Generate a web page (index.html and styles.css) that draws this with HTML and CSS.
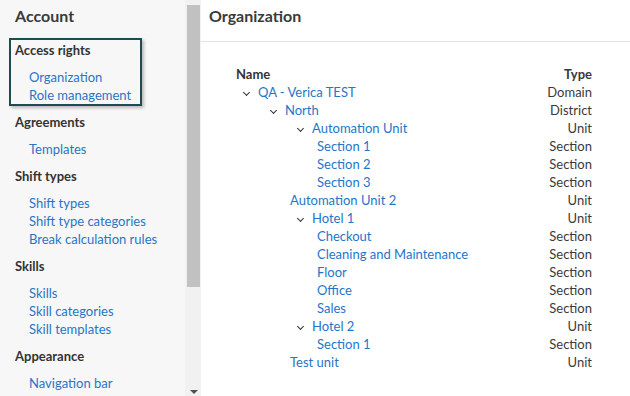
FILE: index.html
```html
<!DOCTYPE html>
<html lang="en">
<head>
    <meta charset="UTF-8">
    <title>Organization</title>
    <link rel="stylesheet" href="styles.css">
</head>
<body>
    <div class="app">
        <nav class="sidebar">
            <div class="account">Account</div>
            <div class="group marked">
                <div class="group-title">Access rights</div>
                <a class="link">Organization</a>
                <a class="link">Role management</a>
            </div>
            <div class="group">
                <div class="group-title">Agreements</div>
                <a class="link">Templates</a>
            </div>
            <div class="group">
                <div class="group-title">Shift types</div>
                <a class="link">Shift types</a>
                <a class="link">Shift type categories</a>
                <a class="link">Break calculation rules</a>
            </div>
            <div class="group">
                <div class="group-title">Skills</div>
                <a class="link">Skills</a>
                <a class="link">Skill categories</a>
                <a class="link">Skill templates</a>
            </div>
            <div class="group">
                <div class="group-title">Appearance</div>
                <a class="link">Navigation bar</a>
            </div>
        </nav>
        <div class="scrollbar">
            <div class="thumb"></div>
            <div class="arrow"></div>
        </div>
        <main class="main">
            <h1 class="title">Organization</h1>
            <table class="org">
                <thead>
                    <tr><th class="name">Name</th><th class="type">Type</th></tr>
                </thead>
                <tbody>
                    <tr><td class="name lv0"><span class="chev"></span><a>QA - Verica TEST</a></td><td class="type">Domain</td></tr>
                    <tr><td class="name lv1"><span class="chev"></span><a>North</a></td><td class="type">District</td></tr>
                    <tr><td class="name lv2"><span class="chev"></span><a>Automation Unit</a></td><td class="type">Unit</td></tr>
                    <tr><td class="name lv3"><a>Section 1</a></td><td class="type">Section</td></tr>
                    <tr><td class="name lv3"><a>Section 2</a></td><td class="type">Section</td></tr>
                    <tr><td class="name lv3"><a>Section 3</a></td><td class="type">Section</td></tr>
                    <tr><td class="name lv2"><a>Automation Unit 2</a></td><td class="type">Unit</td></tr>
                    <tr><td class="name lv2"><span class="chev"></span><a>Hotel 1</a></td><td class="type">Unit</td></tr>
                    <tr><td class="name lv3"><a>Checkout</a></td><td class="type">Section</td></tr>
                    <tr><td class="name lv3"><a>Cleaning and Maintenance</a></td><td class="type">Section</td></tr>
                    <tr><td class="name lv3"><a>Floor</a></td><td class="type">Section</td></tr>
                    <tr><td class="name lv3"><a>Office</a></td><td class="type">Section</td></tr>
                    <tr><td class="name lv3"><a>Sales</a></td><td class="type">Section</td></tr>
                    <tr><td class="name lv2"><span class="chev"></span><a>Hotel 2</a></td><td class="type">Unit</td></tr>
                    <tr><td class="name lv3"><a>Section 1</a></td><td class="type">Section</td></tr>
                    <tr><td class="name lv2"><a>Test unit</a></td><td class="type">Unit</td></tr>
                </tbody>
            </table>
        </main>
    </div>
</body>
</html>
```

FILE: styles.css
```css
*, *:before, *:after {
    box-sizing: border-box;
}

body {
    margin: 0;
    font-family: Lato, "Liberation Sans", sans-serif;
    font-size: 13px;
    line-height: 18px;
    color: #333;
    background: #fff;
}

.app {
    display: flex;
    height: 396px;
    overflow: hidden;
}

.sidebar {
    width: 185px;
    flex-shrink: 0;
    background-color: #f7f7f7;
    padding-left: 15px;
}

.account {
    height: 32px;
    line-height: 32px;
    font-size: 16px;
    font-weight: bold;
    color: #3a3a3a;
    margin-bottom: 9px;
}

.group {
    display: flex;
    flex-direction: column;
    margin-bottom: 9px;
}

.group.marked {
    position: relative;
}

/* highlight box over the first group */
.group.marked:after {
    content: "";
    position: absolute;
    top: -3px;
    left: -6px;
    width: 133px;
    height: 68px;
    border: 2px solid #1d4b52;
    box-shadow: 2px 2px 3px rgba(0, 0, 0, 0.25);
}

.group-title {
    font-weight: bold;
    color: #333;
    margin-bottom: 9px;
}

.link {
    color: #2675c9;
    padding-left: 14px;
}

.scrollbar {
    width: 16px;
    flex-shrink: 0;
    background-color: #f1f1f1;
    position: relative;
    border-left: 2px solid #f1f1f1;
}

.scrollbar .thumb {
    margin-top: 5px;
    width: 13px;
    height: 282px;
    background-color: #c1c1c1;
}

.scrollbar .arrow {
    position: absolute;
    bottom: 2px;
    left: 3px;
    width: 0;
    height: 0;
    border-style: solid;
    border-width: 4px 4px 0 4px;
    border-color: #505050 transparent transparent transparent;
}

.main {
    flex: 1;
    background: #fff;
}

.title {
    margin: 0;
    height: 42px;
    padding: 5px 0 0 8px;
    font-size: 16px;
    line-height: 22px;
    font-weight: bold;
    color: #3a3a3a;
    border-bottom: 1px solid #e2e2e2;
}

.org {
    margin: 23px 38px 0 35px;
    width: calc(100% - 73px);
    border-collapse: collapse;
}

.org th, .org td {
    padding: 0;
    height: 18px;
    white-space: nowrap;
}

.org th {
    font-weight: bold;
    color: #333;
}

.org .name {
    text-align: left;
}

.org .type {
    text-align: right;
    color: #3a3a3a;
}

.org a {
    color: #2675c9;
}

.org .lv0 { padding-left: 0; }
.org .lv1 { padding-left: 27px; }
.org .lv2 { padding-left: 54px; }
.org .lv3 { padding-left: 81px; }

.chev {
    display: inline-block;
    width: 5px;
    height: 5px;
    margin: 0 9px 3px 8px;
    border-right: 1.5px solid #333;
    border-bottom: 1.5px solid #333;
    transform: rotate(45deg);
    vertical-align: middle;
}
```
